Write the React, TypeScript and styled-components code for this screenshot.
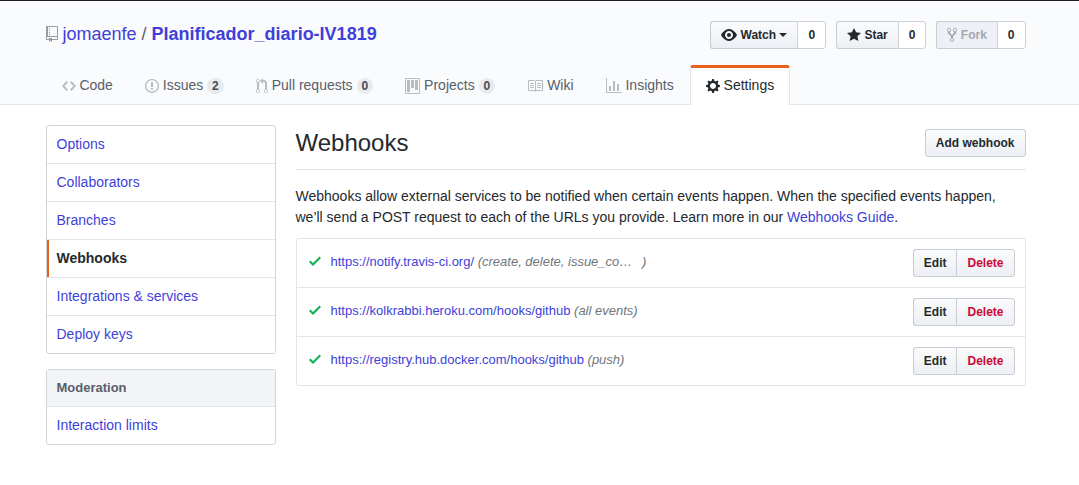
import React from 'react';
import styled, { createGlobalStyle } from 'styled-components';

const GlobalStyle = createGlobalStyle`
  *, *::before, *::after { box-sizing: border-box; }
  body {
    margin: 0;
    background: #fff;
    color: #24292e;
    font-family: "Liberation Sans", Arial, sans-serif;
    font-size: 14px;
    line-height: 21px;
  }
  h1, h2, h3, p, ul { margin: 0; padding: 0; }
  ul { list-style: none; }
`;

const colors = {
  link: '#403fd8',
  text: '#24292e',
  muted: '#586069',
  accent: '#e8601c',
  line: '#e1e4e8',
  danger: '#cb0a36',
};

const icons = {
  repo: { w: 12, d: 'M4 9H3V8h1v1zm0-3H3v1h1V6zm0-2H3v1h1V4zm0-2H3v1h1V2zm8-1v12c0 .55-.45 1-1 1H6v2l-1.5-1.5L3 16v-2H1c-.55 0-1-.45-1-1V1c0-.55.45-1 1-1h10c.55 0 1 .45 1 1zm-1 10H1v2h2v-1h3v1h5v-2zm0-10H2v9h9V1z' },
  code: { w: 14, d: 'M9.5 3L8 4.5 11.5 8 8 11.5 9.5 13 14 8 9.5 3zm-5 0L0 8l4.5 5L6 11.5 2.5 8 6 4.5 4.5 3z' },
  issue: { w: 14, d: 'M7 2.3c3.14 0 5.7 2.56 5.7 5.7s-2.56 5.7-5.7 5.7A5.71 5.71 0 0 1 1.3 8c0-3.14 2.56-5.7 5.7-5.7zM7 1C3.14 1 0 4.14 0 8s3.14 7 7 7 7-3.14 7-7-3.14-7-7-7zm1 3H6v5h2V4zm0 6H6v2h2v-2z' },
  pull: { w: 12, d: 'M11 11.28V5c-.03-.78-.34-1.47-.94-2.06C9.46 2.35 8.78 2.03 8 2H7V0L4 3l3 3V4h1c.27.02.48.11.69.31.21.2.3.42.31.69v6.28A1.993 1.993 0 0 0 10 15a1.993 1.993 0 0 0 1-3.72zm-1 2.92c-.66 0-1.2-.55-1.2-1.2 0-.65.55-1.2 1.2-1.2.65 0 1.2.55 1.2 1.2 0 .65-.55 1.2-1.2 1.2zM4 3c0-1.11-.89-2-2-2a1.993 1.993 0 0 0-1 3.72v6.56A1.993 1.993 0 0 0 2 15a1.993 1.993 0 0 0 1-3.72V4.72c.59-.34 1-.98 1-1.72zm-.8 10c0 .66-.55 1.2-1.2 1.2-.65 0-1.2-.55-1.2-1.2 0-.65.55-1.2 1.2-1.2.65 0 1.2.55 1.2 1.2zM2 4.2C1.34 4.2.8 3.65.8 3c0-.65.55-1.2 1.2-1.2.65 0 1.2.55 1.2 1.2 0 .65-.55 1.2-1.2 1.2z' },
  project: { w: 15, d: 'M10 12h3V2h-3v10zm-4-2h3V2H6v8zm-4 4h3V2H2v12zm-1 1h13V1H1v14zM14 0H1a1 1 0 0 0-1 1v14a1 1 0 0 0 1 1h13a1 1 0 0 0 1-1V1a1 1 0 0 0-1-1z' },
  book: { w: 16, d: 'M3 5h4v1H3V5zm0 3h4V7H3v1zm0 2h4V9H3v1zm11-5h-4v1h4V5zm0 2h-4v1h4V7zm0 2h-4v1h4V9zm2-6v9c0 .55-.45 1-1 1H9.5l-1 1-1-1H2c-.55 0-1-.45-1-1V3c0-.55.45-1 1-1h5.5l1 1 1-1H15c.55 0 1 .45 1 1zm-8 .5L7.5 3H2v9h6V3.5zm7-.5H9.5l-.5.5V12h6V3z' },
  graph: { w: 16, d: 'M16 14v1H0V0h1v14h15zM5 13H3V8h2v5zm4 0H7V3h2v10zm4 0h-2V6h2v7z' },
  gear: { w: 14, d: 'M14 8.77v-1.6l-1.94-.64-.45-1.09.88-1.84-1.13-1.13-1.81.91-1.09-.45-.69-1.92h-1.6l-.63 1.94-1.11.45-1.84-.88-1.13 1.13.91 1.81-.45 1.09L0 7.23v1.59l1.94.64.45 1.09-.88 1.84 1.13 1.13 1.81-.91 1.09.45.69 1.92h1.59l.63-1.94 1.11-.45 1.84.88 1.13-1.13-.92-1.81.47-1.09L14 8.75v.02zM7 11c-1.66 0-3-1.34-3-3s1.34-3 3-3 3 1.34 3 3-1.34 3-3 3z' },
  eye: { w: 16, d: 'M8.06 2C3 2 0 8 0 8s3 6 8.06 6C13 14 16 8 16 8s-3-6-7.94-6zM8 12c-2.2 0-4-1.78-4-4 0-2.2 1.8-4 4-4 2.22 0 4 1.8 4 4 0 2.22-1.78 4-4 4zm2-4c0 1.11-.89 2-2 2-1.11 0-2-.89-2-2 0-1.11.89-2 2-2 1.11 0 2 .89 2 2z' },
  star: { w: 14, d: 'M14 6l-4.9-.64L7 1 4.9 5.36 0 6l3.6 3.26L2.67 14 7 11.67 11.33 14l-.93-4.74L14 6z' },
  fork: { w: 10, d: 'M8 1a1.993 1.993 0 0 0-1 3.72V6L5 8 3 6V4.72A1.993 1.993 0 0 0 2 1a1.993 1.993 0 0 0-1 3.72V6.5l3 3v1.78A1.993 1.993 0 0 0 5 15a1.993 1.993 0 0 0 1-3.72V9.5l3-3V4.72A1.993 1.993 0 0 0 8 1zM2 4.2C1.34 4.2.8 3.65.8 3c0-.65.55-1.2 1.2-1.2.65 0 1.2.55 1.2 1.2 0 .65-.55 1.2-1.2 1.2zm3 10c-.66 0-1.2-.55-1.2-1.2 0-.65.55-1.2 1.2-1.2.65 0 1.2.55 1.2 1.2 0 .65-.55 1.2-1.2 1.2zm3-10c-.66 0-1.2-.55-1.2-1.2 0-.65.55-1.2 1.2-1.2.65 0 1.2.55 1.2 1.2 0 .65-.55 1.2-1.2 1.2z' },
  check: { w: 12, d: 'M12 5l-8 8-4-4 1.5-1.5L4 10l6.5-6.5L12 5z' },
};

type IconName = keyof typeof icons;

const Svg = styled.svg<{ $color?: string }>`
  flex: none;
  display: block;
  fill: ${(p) => p.$color || 'currentColor'};
`;

const Icon = ({ name, color }: { name: IconName; color?: string }) => (
  <Svg
    $color={color}
    width={icons[name].w}
    height={16}
    viewBox={`0 0 ${icons[name].w} 16`}
    aria-hidden="true"
  >
    <path fillRule="evenodd" d={icons[name].d} />
  </Svg>
);

const Link = styled.a`
  color: ${colors.link};
  text-decoration: none;
`;

const Container = styled.div`
  max-width: 980px;
  margin: 0 auto;
`;

const Header = styled.header`
  background: #fafbfd;
  border-top: 1px solid #221c28;
  border-bottom: 1px solid ${colors.line};
  padding: 20px 8px 0 0;
`;

const HeaderRow = styled.div`
  display: flex;
  justify-content: space-between;
  align-items: flex-start;
  margin-bottom: 16px;
`;

const RepoTitle = styled.h1`
  display: flex;
  align-items: center;
  gap: 5px;
  font-size: 18px;
  line-height: 26px;
  font-weight: 400;
  color: ${colors.muted};
`;

const StrongLink = styled(Link)`
  font-weight: 700;
`;

const Actions = styled.ul`
  display: flex;
  gap: 10px;
`;

const ButtonGroup = styled.li`
  display: flex;
`;

const Button = styled.button<{ $side?: 'left' | 'right'; $danger?: boolean }>`
  display: flex;
  align-items: center;
  margin: 0;
  padding: 3px 10px;
  border: 1px solid #c8cbcf;
  border-right-width: ${(p) => (p.$side === 'left' ? '0' : '1px')};
  border-radius: ${(p) =>
    p.$side === 'left' ? '3px 0 0 3px' : p.$side === 'right' ? '0 3px 3px 0' : '3px'};
  background: linear-gradient(#fafbfc, #eceff4);
  color: ${(p) => (p.$danger ? colors.danger : colors.text)};
  font-family: inherit;
  font-size: 12px;
  font-weight: 700;
  line-height: 20px;
  white-space: nowrap;
  cursor: pointer;

  &:disabled {
    background: #edf0f6;
    color: #a4a8ae;
    cursor: default;
  }
`;

const Count = styled.a`
  padding: 3px 10px;
  border: 1px solid #cdd0d4;
  border-radius: 0 3px 3px 0;
  background: #fff;
  color: ${colors.text};
  font-size: 12px;
  font-weight: 700;
  line-height: 20px;
  text-decoration: none;
`;

const Caret = styled.span`
  border: 4px solid transparent;
  border-top-color: currentColor;
  border-bottom-width: 0;
`;

const Tabs = styled.nav`
  display: flex;
  margin-bottom: -1px;
`;

const Tab = styled.a<{ $active?: boolean }>`
  display: flex;
  align-items: center;
  padding: 7px 15px 9px;
  border: 1px solid ${(p) => (p.$active ? colors.line : 'transparent')};
  border-top: 3px solid ${(p) => (p.$active ? colors.accent : 'transparent')};
  border-bottom: 0;
  border-radius: 3px 3px 0 0;
  background: ${(p) => (p.$active ? '#fff' : 'transparent')};
  color: ${(p) => (p.$active ? colors.text : colors.muted)};
  text-decoration: none;
  white-space: nowrap;
`;

const Counter = styled.span`
  padding: 2px 5px;
  border-radius: 8px;
  background: #e8eaed;
  color: #444d56;
  font-size: 12px;
  font-weight: 700;
  line-height: 12px;
`;

const Body = styled.div`
  padding: 20px 8px 40px 0;
`;

const Columns = styled(Container)`
  display: flex;
  align-items: flex-start;
  gap: 20px;
`;

const Sidebar = styled.aside`
  flex: 0 0 230px;
  display: flex;
  flex-direction: column;
  gap: 15px;
`;

const Menu = styled.nav`
  border: 1px solid #d1d5da;
  border-radius: 3px;
  overflow: hidden;
`;

const MenuHeading = styled.h3`
  padding: 8px 10px;
  border-bottom: 1px solid ${colors.line};
  background: #f2f4f8;
  color: ${colors.muted};
  font-size: 13px;
  line-height: 20px;
`;

const MenuItem = styled(Link)<{ $active?: boolean }>`
  display: block;
  padding: 8px 10px;
  border-bottom: 1px solid ${colors.line};

  &:last-child {
    border-bottom: 0;
  }

  ${(p) =>
    p.$active &&
    `
    color: ${colors.text};
    font-weight: 700;
    box-shadow: inset 2px 0 0 ${colors.accent};
  `}
`;

const Main = styled.main`
  flex: 1;
  min-width: 0;
`;

const Subhead = styled.div`
  display: flex;
  justify-content: space-between;
  align-items: center;
  padding-bottom: 8px;
  margin-bottom: 16px;
  border-bottom: 1px solid ${colors.line};
`;

const PageTitle = styled.h2`
  font-size: 24px;
  line-height: 36px;
  font-weight: 400;
`;

const HookList = styled.ul`
  margin-top: 10px;
  border: 1px solid ${colors.line};
  border-radius: 3px;
`;

const HookRow = styled.li`
  display: flex;
  align-items: center;
  padding: 10px 10px 10px 12px;
  font-size: 13px;

  & + & {
    border-top: 1px solid ${colors.line};
  }
`;

const HookStatus = styled.span`
  padding-bottom: 4px;
`;

const HookText = styled.div`
  flex: 1;
  min-width: 0;
  margin-left: 10px;
  padding-bottom: 2px;
  line-height: 20px;
`;

const Events = styled.em`
  color: #6f767d;
`;

const EventNames = styled.span<{ $cut?: boolean }>`
  display: inline-block;
  min-width: ${(p) => (p.$cut ? '160px' : '0')};
`;

const HookActions = styled.div`
  display: flex;
`;

const tabs: { label: string; icon: IconName; count?: number; active?: boolean }[] = [
  { label: 'Code', icon: 'code' },
  { label: 'Issues', icon: 'issue', count: 2 },
  { label: 'Pull requests', icon: 'pull', count: 0 },
  { label: 'Projects', icon: 'project', count: 0 },
  { label: 'Wiki', icon: 'book' },
  { label: 'Insights', icon: 'graph' },
  { label: 'Settings', icon: 'gear', active: true },
];

const menu = ['Options', 'Collaborators', 'Branches', 'Webhooks', 'Integrations & services', 'Deploy keys'];

const hooks = [
  { url: 'https://notify.travis-ci.org/', events: 'create, delete, issue_co…', cut: true },
  { url: 'https://kolkrabbi.heroku.com/hooks/github', events: 'all events' },
  { url: 'https://registry.hub.docker.com/hooks/github', events: 'push' },
];

export default function App() {
  return (
    <>
      <GlobalStyle />
      <Header>
        <Container>
          <HeaderRow>
            <RepoTitle>
              <Icon name="repo" color="#959ba3" />
              <span>
                <Link href="#owner">jomaenfe</Link>
                {' / '}
                <StrongLink href="#repo">Planificador_diario-IV1819</StrongLink>
              </span>
            </RepoTitle>
            <Actions>
              <ButtonGroup>
                <Button type="button" $side="left">
                  <Icon name="eye" />
                  &nbsp;Watch&nbsp;
                  <Caret />
                </Button>
                <Count href="#watchers">0</Count>
              </ButtonGroup>
              <ButtonGroup>
                <Button type="button" $side="left">
                  <Icon name="star" />
                  &nbsp;Star
                </Button>
                <Count href="#stargazers">0</Count>
              </ButtonGroup>
              <ButtonGroup>
                <Button type="button" $side="left" disabled>
                  <Icon name="fork" />
                  &nbsp;Fork
                </Button>
                <Count href="#forks">0</Count>
              </ButtonGroup>
            </Actions>
          </HeaderRow>
          <Tabs aria-label="Repository">
            {tabs.map((t) => (
              <Tab key={t.label} href="#tab" $active={t.active}>
                <Icon name={t.icon} color={t.active ? undefined : '#b9bcc0'} />
                &nbsp;{t.label}
                {t.count !== undefined && (
                  <>
                    &nbsp;<Counter>{t.count}</Counter>
                  </>
                )}
              </Tab>
            ))}
          </Tabs>
        </Container>
      </Header>
      <Body>
        <Columns>
          <Sidebar>
            <Menu aria-label="Settings">
              {menu.map((m) => (
                <MenuItem key={m} href="#section" $active={m === 'Webhooks'}>
                  {m}
                </MenuItem>
              ))}
            </Menu>
            <Menu aria-label="Moderation">
              <MenuHeading>Moderation</MenuHeading>
              <MenuItem href="#limits">Interaction limits</MenuItem>
            </Menu>
          </Sidebar>
          <Main>
            <Subhead>
              <PageTitle>Webhooks</PageTitle>
              <Button type="button">Add webhook</Button>
            </Subhead>
            <p>
              Webhooks allow external services to be notified when certain events happen. When the
              specified events happen, we’ll send a POST request to each of the URLs you provide.
              Learn more in our <Link href="#guide">Webhooks Guide</Link>.
            </p>
            <HookList>
              {hooks.map((h) => (
                <HookRow key={h.url}>
                  <HookStatus>
                    <Icon name="check" color="#0fb050" />
                  </HookStatus>
                  <HookText>
                    <Link href="#hook">{h.url}</Link>{' '}
                    <Events>
                      (<EventNames $cut={h.cut}>{h.events}</EventNames>)
                    </Events>
                  </HookText>
                  <HookActions>
                    <Button type="button" $side="left">Edit</Button>
                    <Button type="button" $side="right" $danger>Delete</Button>
                  </HookActions>
                </HookRow>
              ))}
            </HookList>
          </Main>
        </Columns>
      </Body>
    </>
  );
}
